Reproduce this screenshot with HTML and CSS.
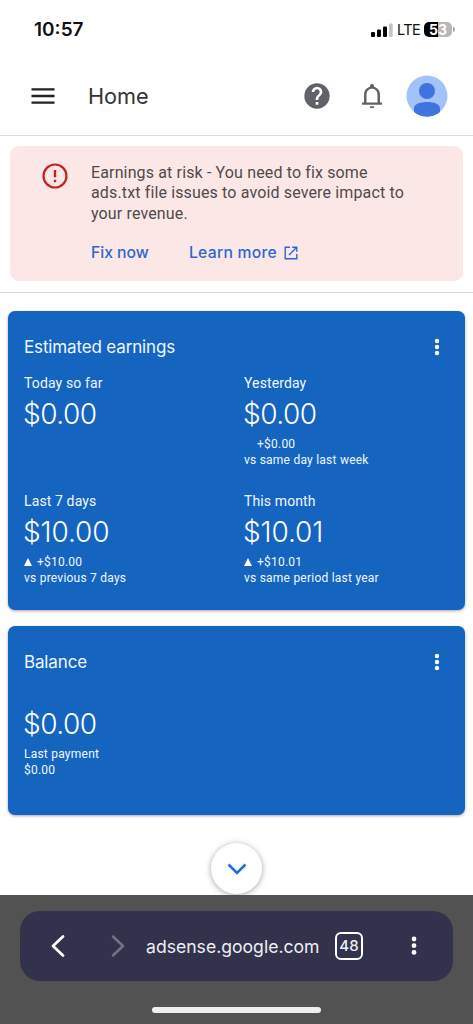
FILE: index.html
```html
<!DOCTYPE html>
<html lang="en">
<head>
<meta charset="utf-8">
<title>Home</title>
<link rel="stylesheet" href="styles.css">
</head>
<body>
<div class="status">
  <span class="clock">10:57</span>
  <div class="status-right">
    <svg class="signal" width="22" height="14" viewBox="0 0 22 14"><rect x="0" y="9" width="4" height="5" rx="1"/><rect x="6" y="6.500" width="4" height="7.500" rx="1"/><rect x="12" y="3.500" width="4" height="10.500" rx="1"/><rect x="18" y="0.500" width="3.700" height="13.500" rx="1" fill="#c4c4c4"/></svg>
    <span class="lte">LTE</span>
    <span class="battery"><span>5</span><span>3</span></span>
    <span class="battery-tip"></span>
  </div>
</div>
<header class="header">
  <svg class="menu" width="24" height="16" viewBox="0 0 24 16"><path d="M0.500 1.400h23M0.500 8h23M0.500 14.600h23" stroke="#222" stroke-width="2.300"/></svg>
  <h1>Home</h1>
  <svg class="help" width="32" height="32" viewBox="0 0 24 24"><path fill="#5f6368" d="M12 2.500a9.500 9.500 0 1 0 0 19 9.500 9.500 0 0 0 0-19zm1 16h-2v-2h2zm2.070-7.250-.9.920C13.450 12.900 13 13.500 13 15h-2v-.5c0-1.100.45-2.100 1.170-2.830l1.240-1.260A2 2 0 1 0 10 9H8a4 4 0 1 1 8 0c0 .880-.360 1.680-.930 2.250z"/></svg>
  <svg class="bell" width="30" height="30" viewBox="0 0 24 24"><path fill="#5f6368" d="M12 21.800c1.100 0 1.900-.7 1.900-1.600h-3.800c0 .9.800 1.600 1.900 1.600zM18.400 17.200v-6.200c0-3.100-1.700-5.600-4.800-6.400V3.900a1.600 1.600 0 0 0-3.200 0v.7c-3.100.8-4.800 3.300-4.800 6.400v6.200H4v1.700h16v-1.700zm-2 0H7.600v-6.200c0-2.700 1.700-4.800 4.400-4.800s4.400 2.100 4.400 4.800z"/></svg>
  <svg class="avatar" width="42" height="42" viewBox="0 0 42 42"><circle cx="21" cy="21" r="20.500" fill="#a1c2fa"/><circle cx="21" cy="16" r="8" fill="#3f73df"/><path d="M8 37v-3.500C8 29 14 27 21 27s13 2 13 6.500V37a20.500 20.500 0 0 1-26 0z" fill="#3f73df"/></svg>
</header>
<section class="alert-wrap">
  <div class="alert">
    <svg class="warn" width="26" height="26" viewBox="0 0 26 26"><circle cx="13" cy="13" r="11.500" fill="none" stroke="#c5221f" stroke-width="2.200"/><path d="M13 7v7.200M13 16.800v2.400" stroke="#c5221f" stroke-width="2.400"/></svg>
    <div>
      <p class="alert-text">Earnings at risk - You need to fix some<br>ads.txt file issues to avoid severe impact to<br>your revenue.</p>
      <div class="links"><a class="fix">Fix now</a><a class="learn">Learn more</a><svg width="14" height="14" viewBox="0 0 14 14" fill="none" stroke="#2f66cc" stroke-width="1.400"><path d="M6 1.200H1.200v11.600h11.600V8M8.200 1.200h4.600v4.600M12.500 1.500L5 9"/></svg></div>
    </div>
  </div>
</section>
<main class="cards">
  <section class="card earnings">
    <div class="card-head"><h2>Estimated earnings</h2><svg class="dots" width="6" height="18" viewBox="0 0 6 18"><circle cx="3" cy="3" r="2.200"/><circle cx="3" cy="9" r="2.200"/><circle cx="3" cy="15" r="2.200"/></svg></div>
    <div class="grid">
      <div class="metric"><p class="label">Today so far</p><p class="amount">$0.00</p></div>
      <div class="metric"><p class="label">Yesterday</p><p class="amount">$0.00</p><p class="small delta"><i class="gap"></i>+$0.00</p><p class="small">vs same day last week</p></div>
      <div class="metric"><p class="label">Last 7 days</p><p class="amount long">$10.00</p><p class="small delta"><i class="up"></i>+$10.00</p><p class="small">vs previous 7 days</p></div>
      <div class="metric"><p class="label">This month</p><p class="amount long">$10.01</p><p class="small delta"><i class="up"></i>+$10.01</p><p class="small">vs same period last year</p></div>
    </div>
  </section>
  <section class="card balance">
    <div class="card-head"><h2>Balance</h2><svg class="dots" width="6" height="18" viewBox="0 0 6 18"><circle cx="3" cy="3" r="2.200"/><circle cx="3" cy="9" r="2.200"/><circle cx="3" cy="15" r="2.200"/></svg></div>
    <p class="amount">$0.00</p>
    <p class="small">Last payment</p>
    <p class="small">$0.00</p>
  </section>
</main>
<div class="more"><button class="round" aria-label="Show more"><svg width="20" height="13" viewBox="0 0 20 13"><path d="M1.500 2.500L10 11l8.500-8.500" fill="none" stroke="#1b6de0" stroke-width="2.500"/></svg></button></div>
<footer class="browser">
  <div class="bar">
    <svg class="back" width="14" height="22" viewBox="0 0 14 22"><path d="M12 1.500L2 11l10 9.500" fill="none" stroke="#fff" stroke-width="2.700" stroke-linecap="round" stroke-linejoin="round"/></svg>
    <svg class="fwd" width="14" height="22" viewBox="0 0 14 22"><path d="M2 1.500L12 11 2 20.500" fill="none" stroke="#737184" stroke-width="2.500" stroke-linecap="round" stroke-linejoin="round"/></svg>
    <span class="url">adsense.google.com</span>
    <span class="tabs">48</span>
    <svg class="dots bar-dots" width="6" height="20" viewBox="0 0 6 20"><circle cx="3" cy="3" r="2.400"/><circle cx="3" cy="9.700" r="2.400"/><circle cx="3" cy="16.400" r="2.400"/></svg>
  </div>
  <div class="home-indicator"></div>
</footer>
</body>
</html>
```
FILE: styles.css
```css
* { box-sizing: border-box; }
body { margin: 0; width: 473px; height: 1024px; overflow: hidden; display: flex; flex-direction: column; background: #fff; font-family: Roboto, sans-serif; }
h1, h2, p { margin: 0; font-weight: 400; white-space: nowrap; }
svg { display: block; flex: none; }

.status { height: 60px; display: flex; justify-content: space-between; padding: 17px 18px 0 34px; font-family: Inter, sans-serif; }
.clock { font-size: 19px; font-weight: 600; line-height: 25px; color: #111; }
.status-right { display: flex; align-items: center; height: 25px; }
.signal { margin-right: 4px; }
.lte { font-size: 14.5px; line-height: 25px; width: 27px; letter-spacing: -0.6px; color: #111; }
.battery { width: 28px; height: 15px; border-radius: 5px; background: linear-gradient(90deg, #000 51%, #b8b8b8 51%); color: #fff; font-size: 14px; font-weight: 700; line-height: 15px; display: flex; justify-content: center; }
.battery-tip { width: 2px; height: 5px; margin-left: 1px; border-radius: 0 2px 2px 0; background: #aaa; }

.header { height: 76px; display: flex; align-items: center; border-bottom: 1px solid #ddd; padding: 1px 25px 4px 31px; }
.header h1 { font-family: Inter, sans-serif; font-size: 21.7px; line-height: 30px; color: #333; margin-left: 33px; width: 214px; }
.help { margin-left: -1px; }
.bell { margin-left: 24px; }
.avatar { margin-left: auto; }

.alert-wrap { height: 157px; padding: 10px 10px 0; border-bottom: 1px solid #dadce0; }
.alert { height: 135px; border-radius: 9px; background: #fbe8e6; display: flex; padding: 17px 0 0 32px; }
.warn { margin-right: 23px; }
.alert-text { font-size: 16px; line-height: 20.3px; letter-spacing: 0.14px; color: #504a4b; }
.links { display: flex; align-items: center; height: 24px; margin-top: 17px; color: #2f66cc; font-family: Inter, sans-serif; font-size: 15.7px; font-weight: 500; }
.fix { width: 98px; }
.learn { width: 95px; letter-spacing: 0.25px; }

.cards { display: flex; flex-direction: column; gap: 16px; padding: 18px 8px 0; }
.card { background: #1565c0; color: #f0f8ff; border-radius: 7px; padding: 22px 25px 0 16px; box-shadow: 0 1px 3px rgba(0, 0, 0, 0.35); }
.earnings { height: 299px; }
.balance { height: 189px; }
.card-head { display: flex; justify-content: space-between; align-items: center; height: 28px; }
.card h2 { font-family: Inter, sans-serif; font-size: 17px; letter-spacing: -0.15px; }
.dots { fill: #fff; }
.grid { display: grid; grid-template-columns: 220px 1fr; grid-template-rows: 118px 118px; padding-top: 12px; }
.label { font-size: 14px; line-height: 20px; letter-spacing: 0.12px; }
.amount { font-family: Inter, sans-serif; font-size: 28px; line-height: 40px; letter-spacing: -0.5px; color: #fff; font-weight: 350; margin: 1px 0 0 -1px; }
.long { letter-spacing: -0.1px; }
.small { font-size: 12px; line-height: 16px; letter-spacing: 0.23px; }
.delta { display: flex; align-items: center; margin-top: 2px; }
.gap { width: 13px; }
.up { border: 4px solid transparent; border-top: 0; border-bottom: 8px solid #fff; margin-right: 5px; }
.balance .amount { margin-top: 28px; }
.balance .amount + .small { margin-top: 2px; }

.more { height: 80px; display: flex; justify-content: center; padding-top: 28px; flex: none; }
.round { width: 51px; height: 51px; border: 0; padding: 0; border-radius: 50%; background: #fff; box-shadow: 0 1px 6px rgba(0, 0, 0, 0.35); display: flex; align-items: center; justify-content: center; }
.browser { height: 129px; flex: none; background: #525252; padding: 16px 20px 0; position: relative; display: flex; flex-direction: column; align-items: center; }
.bar { width: 433px; height: 70px; border-radius: 20px; background: #32324c; display: flex; align-items: center; padding-left: 31px; color: #eeeef4; font-family: Inter, sans-serif; }
.fwd { margin-left: 46px; }
.url { font-size: 17.6px; width: 174px; margin-left: 21px; white-space: nowrap; }
.tabs { width: 28px; height: 28px; border: 2px solid #fff; border-radius: 6px; margin-left: 15px; font-size: 15px; font-weight: 500; line-height: 24px; text-align: center; }
.bar-dots { margin-left: 48px; }
.home-indicator { width: 169px; height: 6px; border-radius: 3px; background: #eee; margin-top: 26px; }
```
